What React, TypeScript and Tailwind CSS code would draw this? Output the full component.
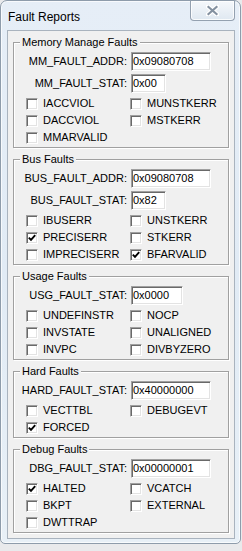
type Field = { label: string; value: string; w: string };
type Check = { label: string; on?: boolean };
type Group = { title: string; fields: Field[]; checks: Check[] };

const groups: Group[] = [
  {
    title: 'Memory Manage Faults',
    fields: [
      { label: 'MM_FAULT_ADDR:', value: '0x09080708', w: 'w-[80px]' },
      { label: 'MM_FAULT_STAT:', value: '0x00', w: 'w-[35px]' },
    ],
    checks: [
      { label: 'IACCVIOL' },
      { label: 'MUNSTKERR' },
      { label: 'DACCVIOL' },
      { label: 'MSTKERR' },
      { label: 'MMARVALID' },
    ],
  },
  {
    title: 'Bus Faults',
    fields: [
      { label: 'BUS_FAULT_ADDR:', value: '0x09080708', w: 'w-[80px]' },
      { label: 'BUS_FAULT_STAT:', value: '0x82', w: 'w-[35px]' },
    ],
    checks: [
      { label: 'IBUSERR' },
      { label: 'UNSTKERR' },
      { label: 'PRECISERR', on: true },
      { label: 'STKERR' },
      { label: 'IMPRECISERR' },
      { label: 'BFARVALID', on: true },
    ],
  },
  {
    title: 'Usage Faults',
    fields: [{ label: 'USG_FAULT_STAT:', value: '0x0000', w: 'w-[52px]' }],
    checks: [
      { label: 'UNDEFINSTR' },
      { label: 'NOCP' },
      { label: 'INVSTATE' },
      { label: 'UNALIGNED' },
      { label: 'INVPC' },
      { label: 'DIVBYZERO' },
    ],
  },
  {
    title: 'Hard Faults',
    fields: [{ label: 'HARD_FAULT_STAT:', value: '0x40000000', w: 'w-[80px]' }],
    checks: [{ label: 'VECTTBL' }, { label: 'DEBUGEVT' }, { label: 'FORCED', on: true }],
  },
  {
    title: 'Debug Faults',
    fields: [{ label: 'DBG_FAULT_STAT:', value: '0x00000001', w: 'w-[80px]' }],
    checks: [
      { label: 'HALTED', on: true },
      { label: 'VCATCH' },
      { label: 'BKPT' },
      { label: 'EXTERNAL' },
      { label: 'DWTTRAP' },
    ],
  },
];

function CheckBox({ on }: { on?: boolean }) {
  return (
    <span className="flex h-[12px] w-[12px] shrink-0 items-center justify-center border-t border-l border-b border-r border-t-[#a0a0a0] border-l-[#a0a0a0] border-b-white border-r-white bg-white shadow-[inset_1px_1px_0_#696969,inset_-1px_-1px_0_#e3e3e3]">
      {on && (
        <svg width="8" height="8" viewBox="0 0 8 8">
          <path d="M0.8 3.6 L3 5.8 L7.2 1.2" fill="none" stroke="#000" strokeWidth="1.9" />
        </svg>
      )}
    </span>
  );
}

function FaultGroup({ g }: { g: Group }) {
  return (
    <fieldset className="border border-[#a0a0a0] shadow-[1px_1px_0_#fff,inset_1px_1px_0_#fff]">
      <legend className="ml-[6px] bg-[#f0f0f0] px-[2px] text-[11px] leading-[13px]">{g.title}</legend>
      <div className="pt-[3px] pb-[1px]">
        <div className="flex flex-col gap-[3px]">
          {g.fields.map((f) => (
            <div key={f.label} className="flex h-[19px] items-center gap-[4px]">
              <div className="w-[113px] text-right text-[11px] leading-[13px]">{f.label}</div>
              <div
                className={`${f.w} flex h-[19px] items-center border-t border-l border-b border-r border-t-[#a0a0a0] border-l-[#a0a0a0] border-b-white border-r-white bg-white pl-[1px] text-[11px] shadow-[inset_1px_1px_0_#696969,inset_-1px_-1px_0_#e3e3e3]`}
              >
                {f.value}
              </div>
            </div>
          ))}
        </div>
        <div className="mt-[2px] grid grid-cols-[104px_1fr] pl-[12px]">
          {g.checks.map((c) => (
            <div key={c.label} className="flex h-[17px] items-center gap-[5px] text-[11px] leading-[13px]">
              <CheckBox on={c.on} />
              <span>{c.label}</span>
            </div>
          ))}
        </div>
      </div>
    </fieldset>
  );
}

export default function App() {
  return (
    <div className="h-[551px] w-[242px] bg-[#e9eaec] font-['Liberation_Sans',Arial,sans-serif] text-black">
      <div className="flex h-[544px] w-[241px] flex-col rounded-t-[7px] rounded-b-[5px] border border-[#8e9cab] bg-gradient-to-b from-[#e6eef7] via-[#e1ebf5] to-[#e8f0f7] shadow-[inset_0_0_0_1px_rgba(255,255,255,0.7)]">
        <div className="flex h-[29px] items-start justify-between">
          <div className="pl-[7px] pt-[9px] text-[12px] leading-[14px] text-black">Fault Reports</div>
          <div className="mr-[5px] flex h-[20px] w-[45px] items-center justify-center rounded-b-[4px] border border-t-0 border-[#94a1b0] bg-gradient-to-b from-[#f5f8fb] to-[#dfe8f1] shadow-[inset_0_0_0_1px_rgba(255,255,255,0.8)]">
            <svg width="13" height="11" viewBox="0 0 13 11">
              <path
                d="M2 1.5 L11 9.5 M11 1.5 L2 9.5"
                fill="none"
                stroke="#fff"
                strokeWidth="4.4"
                strokeLinecap="round"
              />
              <path
                d="M2.5 2 L10.5 9 M10.5 2 L2.5 9"
                fill="none"
                stroke="#8491a0"
                strokeWidth="2.2"
                strokeLinecap="square"
              />
            </svg>
          </div>
        </div>
        <div className="ml-[6px] flex h-[509px] w-[228px] flex-col gap-[5px] border border-[#a9b3be] bg-[#f0f0f0] px-[5px] pt-[5px]">
          {groups.map((g) => (
            <FaultGroup key={g.title} g={g} />
          ))}
        </div>
      </div>
    </div>
  );
}
